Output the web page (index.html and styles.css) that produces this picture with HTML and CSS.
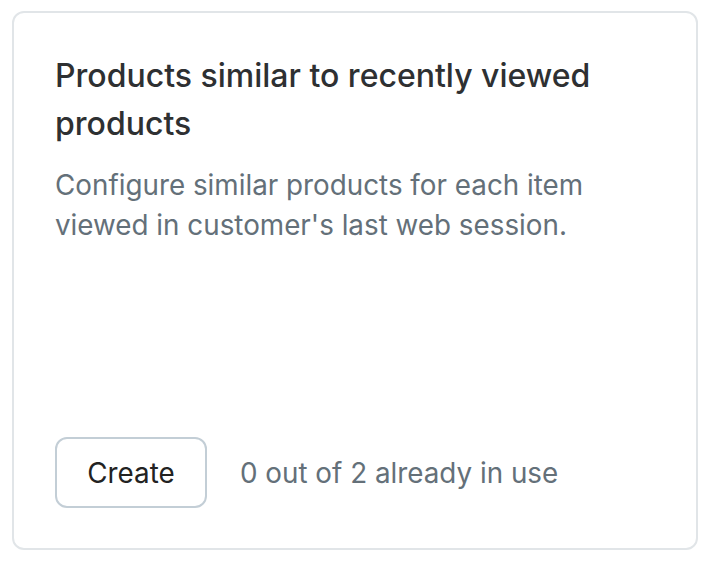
FILE: index.html
```html
<!DOCTYPE html>
<html>
<head>
<meta charset="utf-8">
<link rel="stylesheet" href="styles.css">
</head>
<body>
<div class="card">
  <h2 class="title">Products similar to recently viewed products</h2>
  <p class="desc">Configure similar products for each item viewed in customer's last web session.</p>
  <div class="footer">
    <button class="btn">Create</button>
    <span class="usage">0 out of 2 already in use</span>
  </div>
</div>
</body>
</html>
```
FILE: styles.css
```css
html, body { margin: 0; padding: 0; background: #fff; }
body { font-family: Inter, "Noto Sans", sans-serif; padding: 11px 14px 0 12px; }
.card {
  box-sizing: border-box;
  width: 686px;
  height: 539px;
  border: 2px solid #e1e5e8;
  border-radius: 12px;
  padding: 39px 40px 40px 41px;
  display: flex;
  flex-direction: column;
}
.title {
  margin: 0;
  font-size: 32px;
  font-weight: 450;
  line-height: 48px;
  color: #2e3032;
}
.desc {
  margin: 17px 0 0;
  font-size: 27.8px;
  line-height: 40px;
  color: #647079;
  font-weight: 400;
}
.footer {
  margin-top: auto;
  display: flex;
  align-items: center;
  gap: 33px;
}
.btn {
  font-family: inherit;
  font-size: 27.8px;
  color: #222;
  background: #fff;
  border: 2px solid #c3ced6;
  border-radius: 12px;
  width: 152px;
  height: 71px;
  padding: 0;
}
.usage {
  font-size: 27.8px;
  color: #647079;
}
```
